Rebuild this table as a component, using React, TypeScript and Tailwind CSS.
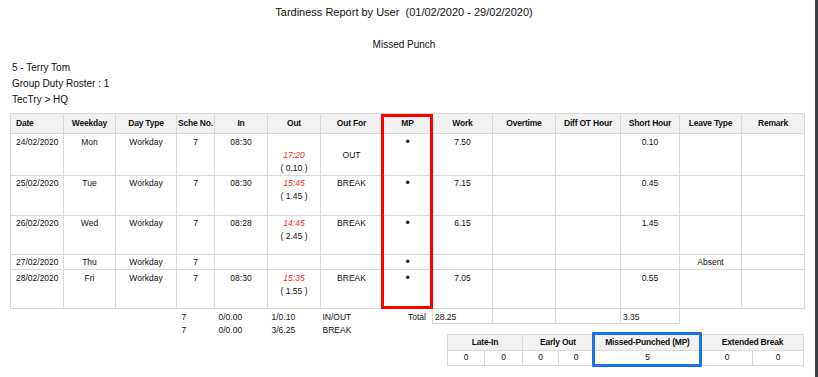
import React from 'react';

interface Row {
  date: string;
  weekday: string;
  dayType: string;
  sche: string;
  inTime: string;
  out: string[];
  outFor: string[];
  work: string;
  short: string;
  leave: string;
  height: string;
}

const headers = [
  'Date',
  'Weekday',
  'Day Type',
  'Sche No.',
  'In',
  'Out',
  'Out For',
  'MP',
  'Work',
  'Overtime',
  'Diff OT Hour',
  'Short Hour',
  'Leave Type',
  'Remark',
];

const colWidths = [53, 52, 61, 38, 53, 53, 62, 50, 60, 63, 65, 59, 62, 63];

const rows: Row[] = [
  { date: '24/02/2020', weekday: 'Mon', dayType: 'Workday', sche: '7', inTime: '08:30', out: ['', '17:20', '( 0.10 )'], outFor: ['', 'OUT'], work: '7.50', short: '0.10', leave: '', height: 'h-[40px]' },
  { date: '25/02/2020', weekday: 'Tue', dayType: 'Workday', sche: '7', inTime: '08:30', out: ['15:45', '( 1.45 )'], outFor: ['BREAK'], work: '7.15', short: '0.45', leave: '', height: 'h-[40px]' },
  { date: '26/02/2020', weekday: 'Wed', dayType: 'Workday', sche: '7', inTime: '08:28', out: ['14:45', '( 2.45 )'], outFor: ['BREAK'], work: '6.15', short: '1.45', leave: '', height: 'h-[39px]' },
  { date: '27/02/2020', weekday: 'Thu', dayType: 'Workday', sche: '7', inTime: '', out: [], outFor: [], work: '', short: '', leave: 'Absent', height: 'h-[15px]' },
  { date: '28/02/2020', weekday: 'Fri', dayType: 'Workday', sche: '7', inTime: '08:30', out: ['15:35', '( 1.55 )'], outFor: ['BREAK'], work: '7.05', short: '0.55', leave: '', height: 'h-[39px]' },
];

const cell = 'border border-[#d9d9d9] align-top pt-[1.5px] leading-[13px]';
const foot = 'align-top pt-[1.5px] leading-[12px] whitespace-nowrap';

// red italic time, black duration in brackets
const OutLine: React.FC<{ text: string }> = ({ text }) => {
  if (!text) return <div>&nbsp;</div>;
  if (text.startsWith('(')) return <div>{text}</div>;
  return <div className="italic text-[#ff1f1f]">{text}</div>;
};

const App: React.FC = () => {
  return (
    <div className="w-[818px] h-[377px] flex bg-white overflow-hidden font-['Liberation_Sans',Arial,sans-serif] text-[#111]">
      <div className="flex-1">
        <div className="w-[808px] text-center">
          <div className="mt-[6px] text-[11px] leading-[13px] whitespace-pre">
            Tardiness Report by User  (01/02/2020 - 29/02/2020)
          </div>
          <div className="mt-[20px] text-[10px] leading-[12px]">Missed Punch</div>
        </div>

        <div className="mt-[9px] pl-[12px] text-[10px] leading-[16px]">
          <div>5 - Terry Tom</div>
          <div>Group Duty Roster : 1</div>
          <div>TecTry &gt; HQ</div>
        </div>

        <div className="relative mt-[5px] ml-[10px] w-[794px]">
          <table className="table-fixed border-collapse w-[794px] text-[8.5px]">
            <colgroup>
              {colWidths.map((w, i) => (
                <col key={i} style={{ width: w }} />
              ))}
            </colgroup>
            <thead>
              <tr className="h-[20px] bg-[#f2f2f2]">
                {headers.map((h, i) => (
                  <th
                    key={h}
                    className={`border border-[#d9d9d9] font-bold text-[8.5px] tracking-[-0.2px] whitespace-nowrap align-middle ${
                      i === 0 ? 'text-left pl-[5px]' : 'text-center'
                    }`}
                  >
                    {h}
                  </th>
                ))}
              </tr>
            </thead>
            <tbody>
              {rows.map((r) => (
                <tr key={r.date} className={r.height}>
                  <td className={`${cell} text-left pl-[5px]`}>{r.date}</td>
                  <td className={`${cell} text-center`}>{r.weekday}</td>
                  <td className={`${cell} text-center`}>{r.dayType}</td>
                  <td className={`${cell} text-center`}>{r.sche}</td>
                  <td className={`${cell} text-center`}>{r.inTime}</td>
                  <td className={`${cell} text-center`}>
                    {r.out.map((o, i) => (
                      <OutLine key={i} text={o} />
                    ))}
                  </td>
                  <td className={`${cell} text-center`}>
                    {r.outFor.map((o, i) => (
                      <div key={i}>{o || '\u00a0'}</div>
                    ))}
                  </td>
                  <td className={`${cell} text-center text-[12px]`}>•</td>
                  <td className={`${cell} text-center`}>{r.work}</td>
                  <td className={cell}></td>
                  <td className={cell}></td>
                  <td className={`${cell} text-center`}>{r.short}</td>
                  <td className={`${cell} text-center`}>{r.leave}</td>
                  <td className={cell}></td>
                </tr>
              ))}
              <tr className="h-[15px]">
                <td className={foot}></td>
                <td className={foot}></td>
                <td className={foot}></td>
                <td className={`${foot} pl-[5px]`}>7</td>
                <td className={`${foot} pl-[4px]`}>0/0.00</td>
                <td className={`${foot} pl-[4px]`}>1/0.10</td>
                <td className={`${foot} pl-[2px]`}>IN/OUT</td>
                <td className={`${foot} text-right pr-[6px]`}>Total</td>
                <td className={`${foot} pl-[2px] border-x border-b border-[#d9d9d9]`}>28.25</td>
                <td className={`${foot} border-x border-b border-[#d9d9d9]`}></td>
                <td className={`${foot} border-x border-b border-[#d9d9d9]`}></td>
                <td className={`${foot} pl-[2px] border-x border-b border-[#d9d9d9]`}>3.35</td>
                <td className={foot}></td>
                <td className={foot}></td>
              </tr>
              <tr className="h-[12px]">
                <td className="p-0"></td>
                <td className="p-0"></td>
                <td className="p-0"></td>
                <td className="p-0 pl-[5px] align-top leading-[12px]">7</td>
                <td className="p-0 pl-[4px] align-top leading-[12px]">0/0.00</td>
                <td className="p-0 pl-[4px] align-top leading-[12px]">3/6.25</td>
                <td className="p-0 pl-[2px] align-top leading-[12px]">BREAK</td>
                <td className="p-0" colSpan={7}></td>
              </tr>
            </tbody>
          </table>

          {/* highlight around MP column */}
          <div className="absolute left-[371px] top-[1px] w-[52px] h-[195px] border-[3px] border-[#ff0000]" />
        </div>

        <div className="relative mt-[-2px] ml-[447px] w-[356px]">
          <table className="table-fixed border-collapse w-[356px] text-[8.5px]">
            <colgroup>
              {[37, 38, 36, 35, 108, 51, 51].map((w, i) => (
                <col key={i} style={{ width: w }} />
              ))}
            </colgroup>
            <thead>
              <tr className="h-[16px] bg-[#f2f2f2]">
                <th colSpan={2} className="border border-[#d9d9d9] font-bold tracking-[-0.2px] text-center">Late-In</th>
                <th colSpan={2} className="border border-[#d9d9d9] font-bold tracking-[-0.2px] text-center">Early Out</th>
                <th className="border border-[#d9d9d9] font-bold tracking-[-0.2px] text-center whitespace-nowrap">Missed-Punched (MP)</th>
                <th colSpan={2} className="border border-[#d9d9d9] font-bold tracking-[-0.2px] text-center">Extended Break</th>
              </tr>
            </thead>
            <tbody>
              <tr className="h-[15px]">
                {['0', '0', '0', '0', '5', '0', '0'].map((v, i) => (
                  <td key={i} className="border border-[#d9d9d9] text-center align-middle">
                    {v}
                  </td>
                ))}
              </tr>
            </tbody>
          </table>

          {/* highlight around MP total */}
          <div className="absolute left-[145px] top-[-2px] w-[110px] h-[35px] border-[3px] border-[#1a73e8] rounded-[1px]" />
        </div>
      </div>
      <div className="w-[3px] bg-[#3b3e43]" />
    </div>
  );
};

export default App;
